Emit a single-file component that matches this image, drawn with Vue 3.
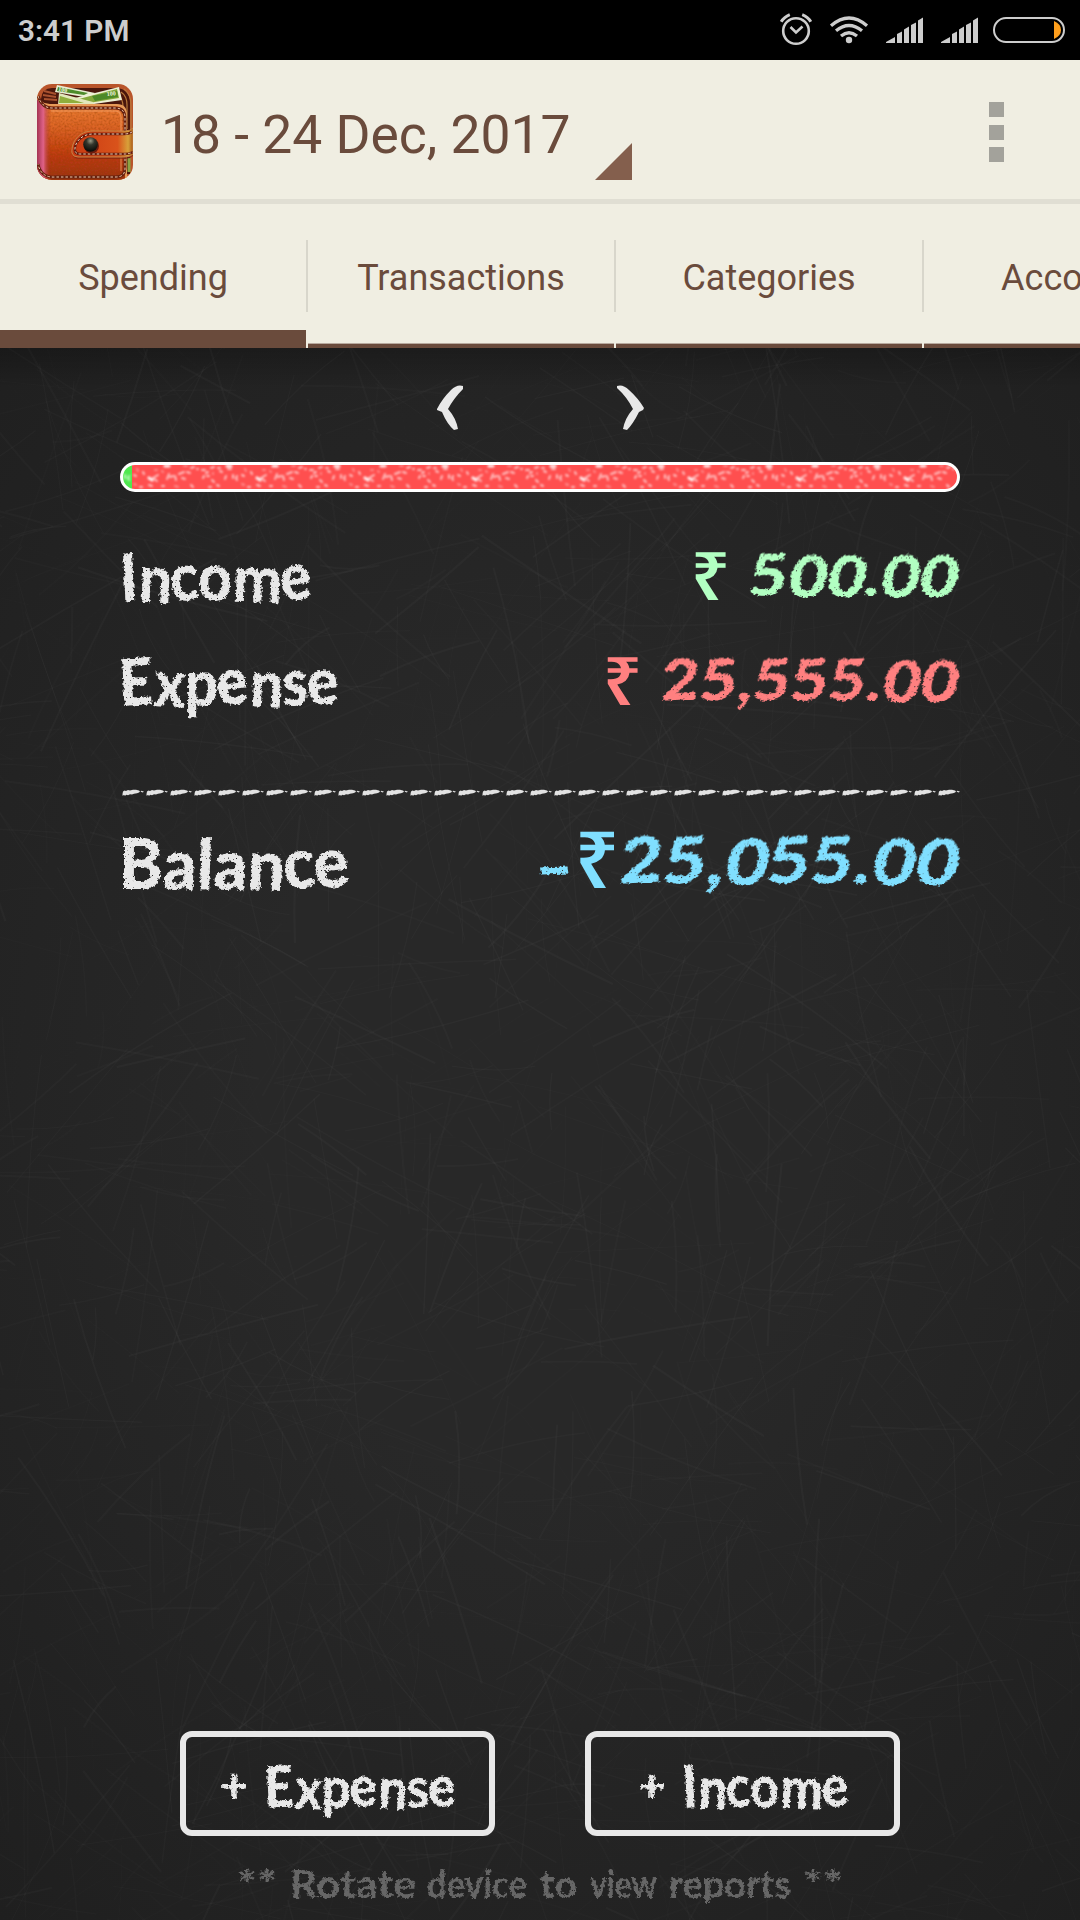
<script setup>
const tabs = ['Spending', 'Transactions', 'Categories', 'Accounts']

let seed = 20171218
const rnd = () => {
  seed = (seed * 1664525 + 1013904223) % 4294967296
  return seed / 4294967296
}

// Faint chalk scratches on the board
const scratches = Array.from({ length: 1700 }, () => {
  const x = rnd() * 1080
  const y = rnd() * 1572
  const a = rnd() * Math.PI * 2
  const l = 50 + rnd() * 150
  const bend = (rnd() - 0.5) * 16
  const dx = Math.cos(a) * l
  const dy = Math.sin(a) * l
  return {
    d: `M${x.toFixed(1)} ${y.toFixed(1)}q${(dx / 2 - Math.sin(a) * bend).toFixed(1)} ${(dy / 2 + Math.cos(a) * bend).toFixed(1)} ${dx.toFixed(1)} ${dy.toFixed(1)}`,
    o: (0.008 + rnd() * 0.016).toFixed(3),
    w: (1 + rnd() * 1.4).toFixed(1)
  }
})

const dashes = Array.from({ length: 35 }, (_, i) => i * 24 + 2)

const hint = [
  { t: '**', x: 237, w: 40 },
  { t: 'Rotate', x: 290, w: 126 },
  { t: 'device', x: 427, w: 100 },
  { t: 'to', x: 540, w: 37 },
  { t: 'view', x: 590, w: 67 },
  { t: 'reports', x: 669, w: 122 },
  { t: '**', x: 803, w: 40 }
]
</script>

<template>
  <div class="screen">
    <header class="status">
      <span class="clock">3:41 PM</span>
      <svg class="status-icons" width="310" height="60" viewBox="770 0 310 60" fill="none" stroke="#cdcdcd">
        <circle cx="796" cy="31" r="12.8" stroke-width="2.6" />
        <path d="M790.5 27l5.5 5.5 6.500-6" stroke-width="2.6" />
        <path d="M781.200 21.800q3-5 8.600-7.200M802.200 14.600q5.800 2.200 8.600 7.200" stroke-width="3" />
        <path d="M831 25.800q18-15.500 36 0M836 30.800q13-10.500 26 0M841 36q8-6.500 16 0" stroke-width="3.300" />
        <circle cx="849" cy="40" r="3.200" fill="#cdcdcd" stroke="none" />
        <g v-for="x in [886, 941]" :key="x" :transform="`translate(${x} 0)`" fill="#cdcdcd" stroke="none">
          <path d="M0 43v-1l9-5v6zM11 43v-9l5-2.500V43zM18 43V29.500l5-3V43zM25 43V25l5-2.500V43zM32 43V20.500l5-3V43z" />
        </g>
        <rect x="994" y="18" width="70" height="24" rx="12" stroke-width="2" />
        <path d="M1054 21q7 3 7 9t-7 9z" fill="#ff9f1c" stroke="none" />
      </svg>
    </header>

    <div class="appbar">
      <svg class="wallet" width="96" height="96" viewBox="0 0 96 96">
        <defs>
          <linearGradient id="leather" x1="0" y1="0" x2="0" y2="1">
            <stop offset="0" stop-color="#ef8438" />
            <stop offset=".35" stop-color="#dc6426" />
            <stop offset=".7" stop-color="#bd3a12" />
            <stop offset="1" stop-color="#9c3412" />
          </linearGradient>
          <linearGradient id="spine" x1="0" y1="0" x2="1" y2="0">
            <stop offset="0" stop-color="#a43352" />
            <stop offset=".45" stop-color="#df6288" />
            <stop offset="1" stop-color="#a52b17" stop-opacity="0" />
          </linearGradient>
          <linearGradient id="strap" x1="0" y1="0" x2="1" y2="0">
            <stop offset="0" stop-color="#c93a12" />
            <stop offset=".75" stop-color="#d9531b" />
            <stop offset=".92" stop-color="#d8a13a" />
            <stop offset="1" stop-color="#a85818" />
          </linearGradient>
          <radialGradient id="snap" cx=".5" cy=".25" r=".7">
            <stop offset="0" stop-color="#9a9a86" />
            <stop offset=".4" stop-color="#34362c" />
            <stop offset="1" stop-color="#0b0d09" />
          </radialGradient>
          <clipPath id="shape"><rect width="96" height="96" rx="15" /></clipPath>
        </defs>
        <g clip-path="url(#shape)">
          <rect width="96" height="96" fill="#b9552b" />
          <path d="M4 15Q5 4 15 4H80Q92 5 93 18V90H20L4 24z" fill="#4b170c" />
          <path d="M7 7l12 3M6 11l13 2M7 15l13 1" stroke="#a9522f" stroke-width="2" />
          <path d="M84 8q6 4 6 13v24M80 10q6 4 6 13v20M87 5q7 5 7 16v24" fill="none" stroke="#b9793b" stroke-width="1.200" />
          <path d="M20 1l38 8-5 5-35-6z" fill="#e9eed2" />
          <path d="M21 3l30 6-4 2-27-4z" fill="#4d8b2a" />
          <path d="M34 15L82 3l3 13-28 4-23-2z" fill="#edf0d3" />
          <path d="M38 16L80 5l2 9-30 5-14-2z" fill="#84a83a" />
          <path d="M55 12l25-5 1 6-23 4z" fill="#4d8928" />
          <path d="M22 9l34 9v3H21z" fill="#e2e8bb" />
          <path d="M23 12l24 7H22z" fill="#8fae3c" />
          <text x="70" y="12" font-size="6" fill="#f4f5df" font-family="Liberation Serif, serif" font-weight="bold" transform="rotate(-7 71 12)">100</text>
          <text x="21" y="7" font-size="6" fill="#f4f5df" font-family="Liberation Serif, serif" font-weight="bold" transform="rotate(9 21 7)">100</text>
          <path d="M0 9Q2 20 13 20H80Q90 20 90 31V96H0z" fill="#e79b59" />
          <path d="M0 15Q4 22 14 22H79Q88 23 88 32V96H0z" fill="url(#leather)" filter="url(#grain)" />
          <path d="M0 15Q4 22 14 22V96H0z" fill="url(#spine)" />
          <path d="M14 27h64q6 0 6 6v54" fill="none" stroke="#f4a268" stroke-opacity=".55" stroke-width="1.500" />
          <path d="M1 12q4 12 14 12h63q10 0 10 10v50q0 9-9 9H18Q4 94 1 80" fill="none" stroke="#65200f" stroke-width="2.800" />
          <path d="M1 12q4 12 14 12h63q10 0 10 10v50q0 9-9 9H18Q4 94 1 80" fill="none" stroke="#f0cbae" stroke-width="1" stroke-dasharray="2.500 2" />
          <path d="M92 74v14" stroke="#8ba343" stroke-width="3" />
          <path d="M96 46q-3 3-8 3H58C42 49 35 58 36 71q1 4 6 4h47q4 0 7-3z" fill="#7d2110" opacity=".6" />
          <path d="M96 44q-3 3-8 3H56C42 47 34 58 35 69q1 4 6 4h47q5 0 8-3z" fill="url(#strap)" stroke="#c48447" />
          <path d="M95 48q-3 2-8 2H56C44 50 37 59 38 67q1 3 5 3h45q4 0 8-2" fill="none" stroke="#651b0c" stroke-width="2.400" />
          <path d="M95 48q-3 2-8 2H56C44 50 37 59 38 67q1 3 5 3h45q4 0 8-2" fill="none" stroke="#f0d3b8" stroke-width="1" stroke-dasharray="2.500 2" />
          <circle cx="54.500" cy="62" r="7.500" fill="#6d1b0c" />
          <circle cx="53.500" cy="60.500" r="7.300" fill="url(#snap)" />
        </g>
      </svg>
      <span class="title">18 - 24 Dec, 2017</span>
      <svg class="spinner" width="37" height="37" viewBox="0 0 37 37"><path d="M37 0v37H0z" fill="#845f4d" /></svg>
      <div class="menu"><i></i><i></i><i></i></div>
    </div>

    <nav class="tabs">
      <div v-for="(t, i) in tabs" :key="t" class="tab" :class="{ active: i === 0 }"><span>{{ t }}</span></div>
    </nav>

    <main class="board">
      <svg class="texture" width="1080" height="1572">
        <defs>
          <filter id="chalk" x="-5%" y="-10%" width="110%" height="120%">
            <feTurbulence type="fractalNoise" baseFrequency=".3" numOctaves="3" seed="7" result="n" />
            <feDisplacementMap in="SourceGraphic" in2="n" scale="5" xChannelSelector="R" yChannelSelector="G" result="rough" />
            <feTurbulence type="fractalNoise" baseFrequency=".6" numOctaves="2" seed="3" />
            <feColorMatrix values="0 0 0 0 0  0 0 0 0 0  0 0 0 0 0  0 0 0 -14 11" result="specks" />
            <feComposite in="rough" in2="specks" operator="in" />
          </filter>
          <filter id="grain" x="0" y="0" width="1" height="1">
            <feTurbulence type="fractalNoise" baseFrequency=".5" numOctaves="2" seed="2" />
            <feColorMatrix values="0 0 0 0 .3  0 0 0 0 .05  0 0 0 0 0  0 0 0 1.200 -.45" />
            <feComposite in2="SourceGraphic" operator="in" result="g" />
            <feMerge><feMergeNode in="SourceGraphic" /><feMergeNode in="g" /></feMerge>
          </filter>
        </defs>
        <path v-for="(s, i) in scratches" :key="i" :d="s.d" fill="none" stroke="#fff" :stroke-opacity="s.o" :stroke-width="s.w" />
      </svg>

      <svg class="line" width="840" height="114" viewBox="120 348 840 114">
        <g fill="#e8e8e8">
          <path d="M463 386q-6-2-12 4-9 9-14 19l0 1 5 2q5 12 12 18l4-1q-2-11-10-20 6-11 15-20z" />
          <path d="M617 386q6-2 12 4 9 8 15 18l-1 2-4 2q-6 12-12 18l-4-1q2-11 10-20-6-12-16-21z" />
        </g>
      </svg>

      <svg class="line" width="840" height="30" viewBox="0 0 840 30">
        <defs>
          <clipPath id="pill"><rect x="2" y="2" width="836" height="26" rx="13" /></clipPath>
          <filter id="soft"><feGaussianBlur stdDeviation=".9" /></filter>
          <pattern id="flecks" x="-28" y="3" width="108" height="24" patternUnits="userSpaceOnUse">
            <g fill="none" stroke="#fff" stroke-linecap="round" stroke-opacity=".65" stroke-width="2" filter="url(#soft)">
              <path d="M2 5h3M6 8l2-1M11 3l3-1M18 3h2M3 13l1-2M7 11h2M12 15l2 2M20 6l2 1M17 20l2 1M25 14l1-3M33 10v3M37 11l-1 2 1 2M42 10l2 1M51 7l1 2M66 10l-5 3 4 3M77 9l-2 5M78 12l3-1M83 11l1 4M87 9l5-2M95 7l3 1M90 13l3 1M99 3l3-1M28 4h3M48 22h2M57 20l3 1M9 22h2M99 20l2 2M105 4h1M70 21h2" />
              <path d="M57 13l3 2M27 1h4M73 1h4" stroke-width="3.200" stroke-opacity=".9" />
              <path d="M92 1h3M42 19l2 1M83 21l3 1M45 4l1 2M63 5h2M13 8v1M70 6l1 1" stroke-opacity=".35" />
            </g>
          </pattern>
        </defs>
        <g clip-path="url(#pill)">
          <rect width="840" height="30" fill="#ff4f4f" />
          <rect width="12" height="30" fill="#4fe84f" />
          <rect width="840" height="30" fill="url(#flecks)" />
        </g>
        <rect x="1.500" y="1.500" width="837" height="27" rx="13.500" fill="none" stroke="#fff" stroke-width="3" />
      </svg>

      <svg class="line hand" width="840" height="152" viewBox="120 492 840 152">
        <text x="121" y="601.500" font-size="66" textLength="192" lengthAdjust="spacingAndGlyphs" rotate="-3 3 -4 -3 2 -6">Income</text>
        <g fill="#b2ffc2">
          <text class="rupee" x="691" y="600" font-size="68" textLength="39" lengthAdjust="spacingAndGlyphs">₹</text>
          <text transform="translate(747 596) skewX(-9)" font-size="57" textLength="208" lengthAdjust="spacingAndGlyphs" rotate="-3 3 3 0 3 3">500.00</text>
        </g>
      </svg>

      <svg class="line hand" width="840" height="116" viewBox="120 644 840 116">
        <text x="120" y="706" font-size="65" textLength="220" lengthAdjust="spacingAndGlyphs" rotate="-3 3 0 -6 3 -2 -6">Expense</text>
        <g fill="#ff8080">
          <text class="rupee" x="603" y="705" font-size="68" textLength="39" lengthAdjust="spacingAndGlyphs">₹</text>
          <text transform="translate(660 701) skewX(-9)" font-size="57" textLength="295" lengthAdjust="spacingAndGlyphs" rotate="-4 -3 0 -3 -3 -3 0 3 3">25,555.00</text>
        </g>
      </svg>

      <svg class="line" width="840" height="60" viewBox="0 760 840 60">
        <g fill="#e2e2e2">
          <path v-for="x in dashes" :key="x" :transform="`translate(${x} 789)`" d="M1 2.500l1.500-1 1.500.500 2-1 2 .500 3-.800h3l3 .800 1 1-1 1-2 .800-3 .500-2 .600-2-.200-2 1-1.500-.500-1.500 1-1-.600-1.500.600V5zM18.500 2.600l1-.900 2.500 1-1.500.800z" />
        </g>
      </svg>

      <svg class="line hand" width="840" height="100" viewBox="120 820 840 100">
        <text x="119" y="889" font-size="70" textLength="232" lengthAdjust="spacingAndGlyphs" rotate="0 2 2 2 3 -4 -6">Balance</text>
        <g fill="#80dfff">
          <text x="537" y="890" font-size="62" textLength="39" lengthAdjust="spacingAndGlyphs" rotate="-4">-</text>
          <text class="rupee" x="575" y="888" font-size="78" textLength="44" lengthAdjust="spacingAndGlyphs">₹</text>
          <text transform="translate(618 884) skewX(-9)" font-size="64" textLength="337" lengthAdjust="spacingAndGlyphs" rotate="-4 -3 0 3 -3 -3 0 3 3">25,055.00</text>
        </g>
      </svg>

      <div class="actions">
        <button type="button">
          <svg class="hand" width="303" height="93" viewBox="186 1737 303 93">
            <text x="220" y="1802" font-size="46" textLength="28" lengthAdjust="spacingAndGlyphs">+</text>
            <text x="265" y="1808" font-size="57" textLength="192" lengthAdjust="spacingAndGlyphs" rotate="-3 3 0 -6 3 -2 -6">Expense</text>
          </svg>
        </button>
        <button type="button">
          <svg class="hand" width="303" height="93" viewBox="591 1737 303 93">
            <text x="638" y="1802" font-size="46" textLength="28" lengthAdjust="spacingAndGlyphs">+</text>
            <text x="683" y="1808" font-size="58" textLength="167" lengthAdjust="spacingAndGlyphs" rotate="-3 3 -4 -3 2 -6">Income</text>
          </svg>
        </button>
      </div>

      <svg class="line hand hint" width="840" height="84" viewBox="120 1836 840 84">
        <text v-for="h in hint" :key="h.x" :x="h.x" y="1898" font-size="39" :textLength="h.w" lengthAdjust="spacingAndGlyphs">{{ h.t }}</text>
      </svg>
    </main>
  </div>
</template>

<style>
body { background: #262626; }
</style>

<style scoped>
.screen {
  width: 1080px;
  height: 1920px;
  overflow: hidden;
  display: flex;
  flex-direction: column;
  font-family: Roboto, sans-serif;
  color: #6a4b3c;
}
.status {
  height: 60px;
  flex: none;
  background: #000;
  display: flex;
  justify-content: space-between;
  align-items: center;
}
.clock {
  padding: 1px 0 0 18px;
  font-size: 29.700px;
  font-weight: 600;
  color: #cdcdcd;
}
.appbar {
  box-sizing: border-box;
  height: 144px;
  flex: none;
  background: #f0eee2;
  border-bottom: 5px solid #e0ded3;
  display: flex;
  align-items: flex-start;
  padding: 24px 76px 0 37px;
}
.title {
  margin: 19px 0 0 28px;
  font-size: 53.400px;
  line-height: 64px;
  width: 434px;
  white-space: nowrap;
}
.spinner { margin-top: 59px; }
.menu {
  margin: 18px 0 0 auto;
  display: flex;
  flex-direction: column;
  gap: 7.500px;
}
.menu i { width: 15px; height: 15px; background: #a3a29b; }
.tabs {
  height: 144px;
  width: 1232px;
  flex: none;
  display: flex;
  gap: 2px;
  background: linear-gradient(#f0eee2 36px, #d8d6cb 36px, #d8d6cb 108px, #f0eee2 108px);
}
.tab {
  box-sizing: border-box;
  width: 306px;
  flex: none;
  background: #f0eee2;
  border-bottom: 4px solid #6a4b3c;
  box-shadow: inset 0 -1px #b8aa9f;
  text-align: center;
  font-size: 36px;
  line-height: 42px;
  padding-top: 53px;
}
.tab.active { border-bottom-width: 18px; box-shadow: none; }
.board {
  position: relative;
  flex: 1;
  display: flex;
  flex-direction: column;
  align-items: center;
  background:
    linear-gradient(rgba(0, 0, 0, .22), transparent 40px),
    radial-gradient(ellipse 75% 70% at 50% 48%, #282828 35%, #1f1f1f 100%);
}
.texture { position: absolute; inset: 0; }
.line { position: relative; flex: none; display: block; overflow: visible; }
.hand {
  font-family: Lato, sans-serif;
  font-weight: 900;
  fill: #e8e8e8;
}
.hand text { filter: url(#chalk); }
.hand .rupee { font-family: "Noto Sans", sans-serif; font-weight: 600; filter: none; }
.hint { fill: #666; font-weight: 700; }
.actions {
  position: relative;
  margin-top: auto;
  display: flex;
  gap: 90px;
}
button {
  box-sizing: border-box;
  width: 315px;
  height: 105px;
  padding: 0;
  border: 6px solid #e8e8e8;
  border-radius: 12px;
  background: none;
}
button svg { display: block; }
</style>
